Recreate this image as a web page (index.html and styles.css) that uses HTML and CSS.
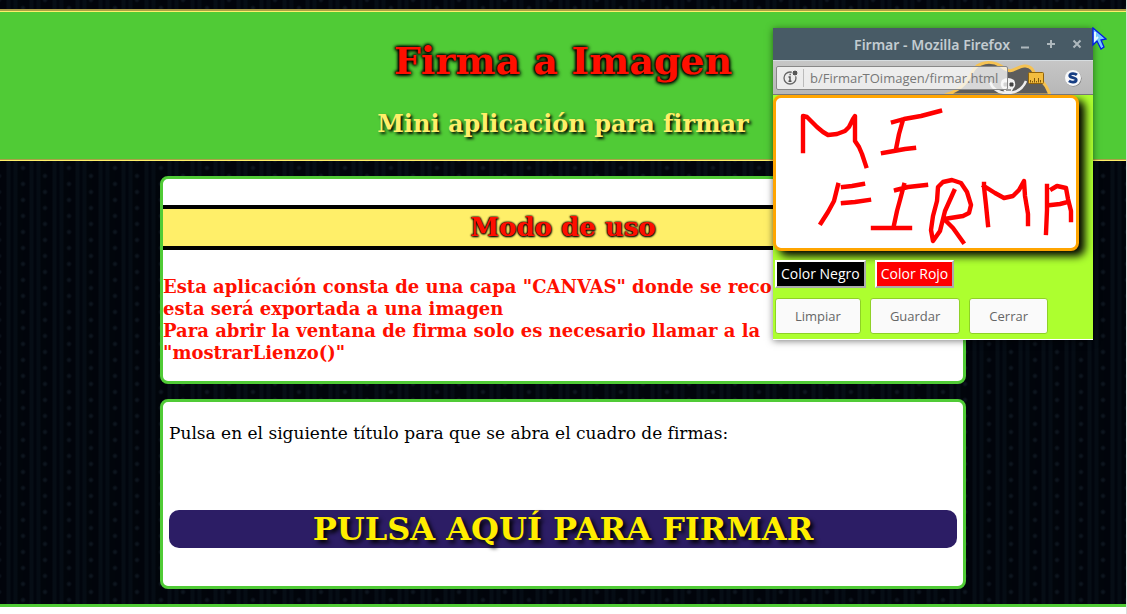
FILE: index.html
```html
<!DOCTYPE html>
<html lang="es">
<head>
<meta charset="utf-8">
<title>Firma a Imagen</title>
<link rel="stylesheet" href="styles.css">
</head>
<body>
<header class="banner">
  <h1 class="banner-title">Firma a Imagen</h1>
  <h2 class="banner-subtitle">Mini aplicación para firmar</h2>
</header>
<main class="content">
  <section class="card usage">
    <h2 class="usage-title">Modo de uso</h2>
    <h3 class="usage-text">Esta aplicación consta de una capa "CANVAS" donde se reco<br>esta será exportada a una imagen<br>Para abrir la ventana de firma solo es necesario llamar a la<br>"mostrarLienzo()"</h3>
  </section>
  <section class="card launch">
    <p class="launch-text">Pulsa en el siguiente título para que se abra el cuadro de firmas:</p>
    <button class="launch-button" type="button">PULSA AQUÍ PARA FIRMAR</button>
  </section>
</main>
<footer class="footer"></footer>

<div class="window" role="dialog" aria-label="Firmar">
  <div class="titlebar">
    <span class="window-title">Firmar - Mozilla Firefox</span>
    <button class="window-control" type="button" aria-label="Minimizar"><svg width="10" height="10" viewBox="0 0 10 10"><path d="M1 8.500h8"/></svg></button>
    <button class="window-control" type="button" aria-label="Maximizar"><svg width="10" height="10" viewBox="0 0 10 10"><path d="M1 5h8M5 1v8"/></svg></button>
    <button class="window-control" type="button" aria-label="Cerrar ventana"><svg width="10" height="10" viewBox="0 0 10 10"><path d="M1.500 1.500l7 7M8.500 1.500l-7 7"/></svg></button>
  </div>
  <div class="toolbar">
    <svg class="pirate" width="110" height="33" viewBox="0 0 110 33">
      <path d="M2 34C12 31 19 27 24 20C29 12 31 5 38 3C45 0 53 2 58 5C62 8 65 11 70 9C77 6 84 2 89 8C92 12 92 16 98 19C102 23 105 28 107 34Z" fill="#5c5c5c" stroke="#f5c253" stroke-width="3"/>
      <path d="M47 21Q51 32 64 32Q78 32 83 20" fill="none" stroke="#eee" stroke-width="2.500"/>
      <path d="M59 19q6-4 12 0q3 5-1 9l-2 4h-6l-2-4q-4-4-1-9z" fill="#f2f2f2"/>
      <path d="M61 22h3v3h-3zM67 22h3v3h-3zM63 29h5" fill="#444" stroke="#444"/>
    </svg>
    <label class="address">
      <svg width="17" height="17" viewBox="0 0 17 17"><circle cx="8" cy="9" r="6" fill="none" stroke="#666" stroke-width="1.300"/><path d="M6.500 8H8v4M6.500 12.300h3M7.500 5.500h1.300" fill="none" stroke="#555" stroke-width="1.500"/><circle cx="13" cy="4" r="3" fill="#555" stroke="#f1f1f1"/></svg>
      <input class="address-input" type="text" value="b/FirmarTOimagen/firmar.html" aria-label="Dirección">
    </label>
    <button class="tool" type="button" aria-label="Regla"><svg width="16" height="12" viewBox="0 0 16 12"><rect x=".5" y=".5" width="15" height="11" rx="1" fill="#f3bd3f" stroke="#91630b"/><path d="M2.500 10.500V8M4.500 10.500V9M6.500 10.500V6M8.500 10.500V9M10.500 10.500V6M12.500 10.500V8" stroke="#80570c"/></svg></button>
    <button class="tool" type="button" aria-label="S"><svg width="18" height="18" viewBox="0 0 18 18"><circle cx="9.500" cy="9.500" r="8" fill="#777"/><circle cx="9" cy="9" r="8" fill="#f8f9fa"/><path d="M12.900 5.800C11 4.200 6 4 5.800 6.600C5.600 9.200 12.300 8 12.200 10.900C12.100 13.700 7.200 13.600 4.900 11.900" fill="none" stroke="#173e83" stroke-width="2.900"/></svg></button>
  </div>
  <div class="pad">
    <svg class="canvas" viewBox="0 0 300 150" role="img" aria-label="Mi firma">
      <g fill="none" stroke="#f00" stroke-width="4.400" stroke-linecap="square" stroke-linejoin="round">
        <path d="M27 53V18l4 1 10 10 6 5 5 3 9-1 8-3 4-4 4-8 2-3v25l4 6 3 7 4 12"/>
        <path d="M117 24l11-3 17-3 19-5M127 22l-4 14-3 15M107 55l11-2 11-2 9-1"/>
        <path d="M62 87l-4 16-6 11-7 11M67 89l9-1 11-2M67 105l12-1 14-2"/>
        <path d="M120 92l12-3 18-2M128 87l-4 15-3 11-3 14M97 130h37"/>
        <path d="M178 93l-9 20-5 20-7 10-2-11 2-14 4-15 1-14 5-5 9-2 9 3 6 9 4 13-2 8-6 3-19 3 9 9 5 7 5 7"/>
        <path d="M208 86v3l2 18 2 20M208 88l11 7 9 5 9-2 6-6 5-9 1 15 3 18v10"/>
        <path d="M271 88v24l-1 23M276 91l5-3 9 2 2 11 3 12v9M275 107l9-1 8-2"/>
      </g>
    </svg>
    <div class="colors">
      <button class="swatch black" type="button">Color Negro</button>
      <button class="swatch red" type="button">Color Rojo</button>
    </div>
    <div class="actions">
      <button class="action" type="button">Limpiar</button>
      <button class="action" type="button">Guardar</button>
      <button class="action" type="button">Cerrar</button>
    </div>
  </div>
</div>
<svg class="cursor" width="15" height="24" viewBox="0 0 15 24"><path d="M1 1v17l4-4 4 8 3-2-3-7 5-1z" fill="#75c9ff" stroke="#0018e5" stroke-width="1.300"/><path d="M3 5v8l3-3" fill="none" stroke="#e5f8ff" stroke-width="2"/></svg>
</body>
</html>
```
FILE: styles.css
```css
* {
  box-sizing: border-box;
}

body {
  margin: 0;
  padding-top: 9px;
  position: relative;
  min-height: 100vh;
  display: flex;
  flex-direction: column;
  border-right: 1px solid #ddd;
  font-family: "DejaVu Serif", serif;
  background-color: #01050d;
  background-image:
    radial-gradient(circle, #0d151e 1px, transparent 3px),
    radial-gradient(circle, #0d151e 1px, transparent 3px),
    repeating-linear-gradient(90deg, #01040b 0 6px, #060d15 7px 10px, #01050d 11px 13px, #050c14 14px 17px, #01050b 18px 23px);
  background-size: 46px 16px, 46px 16px, auto;
  background-position: 0 0, 22px 8px, 0 0;
}

h1, h2, h3, p {
  margin: 0;
}

.banner {
  padding: 25px 0 21px;
  text-align: center;
  background: #50cb36;
  border-top: 3px groove #ffef69;
  border-bottom: 2px groove #ffef69;
}

.banner-title {
  font-size: 38px;
  line-height: 47px;
  color: #ff0f00;
  text-shadow: 0 0 3px #000, 0 0 3px #000, 0 0 4px #000, 1px 1px 4px #000;
}

.banner-subtitle {
  margin-top: 26px;
  font-size: 24px;
  line-height: 28px;
  color: #ffef69;
  text-shadow: 2px 2px 3px #000;
}

.content {
  width: 806px;
  max-width: 100%;
  margin: 15px auto;
  display: grid;
  gap: 15px;
}

.card {
  background: #fff;
  border: 3px solid #50cb36;
  border-radius: 8px;
}

.usage {
  padding: 26px 0 17px;
}

.usage-title {
  padding: 2px 0;
  border: solid #000;
  border-width: 4px 0;
  background: #ffef69;
  color: #ff0f00;
  font-size: 26px;
  line-height: 33px;
  text-align: center;
  text-shadow: 0 0 2px #000, 0 0 2px #000, 1px 1px 2px #000;
}

.usage-text {
  margin-top: 26px;
  font-size: 18px;
  line-height: 22px;
  color: #ff0f00;
  white-space: nowrap;
}

.launch {
  padding: 21px 6px 38px;
}

.launch-text {
  margin-bottom: 67px;
  font-size: 17px;
  line-height: 20px;
  color: #000;
}

.launch-button {
  display: block;
  width: 100%;
  padding: 0;
  border: 0;
  border-radius: 10px;
  background: #2c1d65;
  color: #ffee00;
  font-family: inherit;
  font-weight: bold;
  font-size: 32px;
  line-height: 38px;
  text-shadow: 3px 3px 4px #000;
}

.footer {
  flex: 1;
  background: #fff;
  border-top: 3px solid #50cb36;
}

.window {
  position: absolute;
  top: 28px;
  right: 33px;
  width: 320px;
  font-family: "Open Sans", "Noto Sans", sans-serif;
  border-bottom: 1px solid #fff;
  box-shadow: 0 1px 7px rgba(0, 0, 0, .5);
}

.titlebar {
  height: 33px;
  display: flex;
  align-items: center;
  justify-content: flex-end;
  gap: 4px;
  padding-right: 5px;
  background: #485b66;
  border-bottom: 1px solid #d7dde0;
}

.window-title {
  color: #c3ccd1;
  font-family: "Noto Sans", sans-serif;
  font-size: 14px;
  font-weight: 600;
}

.window-control {
  width: 22px;
  height: 22px;
  padding: 0;
  border: 0;
  background: none;
  display: grid;
  place-items: center;
}

.window-control path {
  fill: none;
  stroke: #aeb8bd;
  stroke-width: 2;
}

.toolbar {
  position: relative;
  height: 34px;
  padding: 0 11px 0 3px;
  display: flex;
  align-items: center;
  background: linear-gradient(#c6c6c6, #b7b7b7);
  border-bottom: 1px solid #777;
}

.pirate {
  position: absolute;
  right: 40px;
  bottom: 0;
}

.address {
  position: relative;
  width: 232px;
  height: 24px;
  padding-left: 5px;
  display: flex;
  align-items: center;
  background: rgba(248, 248, 248, .8);
  border: 1px solid #888;
  border-radius: 2px;
}

.address-input {
  width: 204px;
  height: 18px;
  margin-left: 4px;
  padding: 0 0 0 6px;
  border: 0;
  border-left: 1px solid #bbb;
  background: none;
  color: #777;
  font-family: inherit;
  font-size: 13px;
}

.tool {
  position: relative;
  width: 18px;
  height: 18px;
  margin-left: 20px;
  padding: 0;
  border: 0;
  background: none;
  display: grid;
  place-items: center;
}

.pad {
  padding-bottom: 5px;
  background: #adff2f;
}

.canvas {
  display: block;
  width: 306px;
  height: 156px;
  border: 3px solid #ffa500;
  border-radius: 8px;
  background: #fff;
  box-shadow: 6px 5px 8px #000;
}

.colors {
  display: flex;
  gap: 9px;
  padding: 9px 2px 10px;
}

.swatch {
  height: 28px;
  padding: 0 4px;
  border: 2px outset #fff;
  color: #fff;
  font-family: inherit;
  font-size: 14px;
  line-height: 20px;
}

.black {
  background: #000;
}

.red {
  background: #f00;
}

.actions {
  display: flex;
  gap: 9px;
  padding: 0 2px;
}

.action {
  height: 36px;
  padding: 0 19px;
  border: 1px solid #8fd126;
  border-radius: 3px;
  background: #fafafa;
  color: #666;
  font-family: inherit;
  font-size: 13px;
}

.cursor {
  position: absolute;
  top: 27px;
  right: 19px;
}
```
